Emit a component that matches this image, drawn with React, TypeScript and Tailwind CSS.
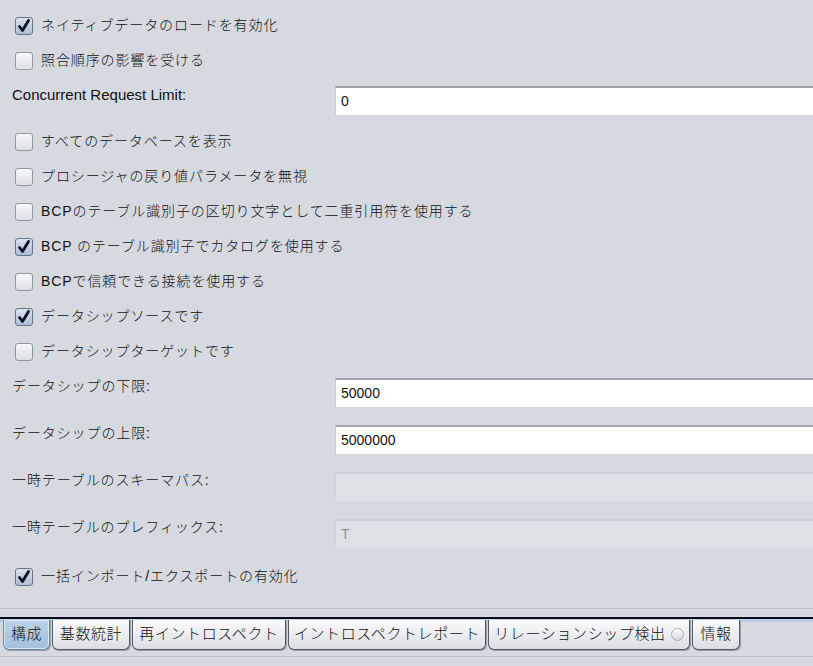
import React from "react";

const font = "font-['Liberation_Sans','Noto_Sans_CJK_JP',sans-serif]";

const Check = ({ checked }: { checked: boolean }) => (
  <span
    className={`relative flex h-[18px] w-[18px] shrink-0 items-center justify-center rounded-[3px] border ${
      checked
        ? "border-[#66748a] bg-gradient-to-b from-[#dbe3ee] to-[#aebed4]"
        : "border-[#9197a1] bg-gradient-to-b from-[#f7f8fa] to-[#dcdfe5]"
    }`}
  >
    {checked && (
      <svg width="14" height="14" viewBox="0 0 14 14">
        <path
          d="M2.5 7.5 L5.5 11.5 L11.5 1.5"
          fill="none"
          stroke="#0d1120"
          strokeWidth="2.8"
          strokeLinecap="round"
          strokeLinejoin="round"
        />
      </svg>
    )}
  </span>
);

const CheckRow = ({ label, checked = false }: { label: string; checked?: boolean }) => (
  <div className="flex h-[35px] items-center gap-[8px] pl-[15px]">
    <Check checked={checked} />
    <span className="text-[14px] font-light leading-[17px] tracking-[0.9px] text-[#111]">{label}</span>
  </div>
);

const FieldRow = ({
  label,
  value,
  disabled = false,
  top,
  h,
}: {
  label: string;
  value: string;
  disabled?: boolean;
  top: string;
  h: string;
}) => (
  <div className={`flex items-start ${h} ${top}`}>
    <span className="w-[335px] shrink-0 pl-[12px] text-[14px] font-light leading-[17px] tracking-[0.9px] text-[#111]">
      {label}
    </span>
    <div
      className={`flex h-[29px] w-[500px] shrink-0 items-center border-l border-t-2 pl-[5px] text-[14px] ${
        disabled
          ? "border-l-[#d0d3d8] border-t-[#cbced4] bg-[#dde0e4] text-[#8d9099]"
          : "border-l-[#c9cbcf] border-t-[#a2a4a8] bg-white text-[#111]"
      }`}
    >
      {value}
    </div>
  </div>
);

const tabs = [
  { label: "構成", w: "w-[47px]", active: true },
  { label: "基数統計", w: "w-[78px]" },
  { label: "再イントロスペクト", w: "w-[154px]" },
  { label: "イントロスペクトレポート", w: "w-[198px]" },
  { label: "リレーションシップ検出", w: "w-[202px]", dot: true },
  { label: "情報", w: "w-[48px]" },
];

export default function App() {
  return (
    <div className={`h-[666px] w-[813px] overflow-hidden bg-[#d6d9e0] ${font}`}>
      <div className="flex flex-col pt-[8px]">
        <CheckRow label="ネイティブデータのロードを有効化" checked />
        <CheckRow label="照合順序の影響を受ける" />
        <div className="flex h-[46px] items-start pt-[8px]">
          <span className="w-[335px] shrink-0 pl-[12px] text-[15px] leading-[17px] text-[#111]">
            Concurrent Request Limit:
          </span>
          <div className="flex h-[29px] w-[500px] shrink-0 items-center border-l border-t-2 border-l-[#c9cbcf] border-t-[#a2a4a8] bg-white pl-[5px] text-[14px] text-[#111]">
            0
          </div>
        </div>
        <CheckRow label="すべてのデータベースを表示" />
        <CheckRow label="プロシージャの戻り値パラメータを無視" />
        <CheckRow label="BCPのテーブル識別子の区切り文字として二重引用符を使用する" />
        <CheckRow label="BCP のテーブル識別子でカタログを使用する" checked />
        <CheckRow label="BCPで信頼できる接続を使用する" />
        <CheckRow label="データシップソースです" checked />
        <CheckRow label="データシップターゲットです" />
        <FieldRow label="データシップの下限:" value="50000" top="pt-[9px]" h="h-[47px]" />
        <FieldRow label="データシップの上限:" value="5000000" top="pt-[9px]" h="h-[47px]" />
        <FieldRow label="一時テーブルのスキーマパス:" value="" disabled top="pt-[9px]" h="h-[47px]" />
        <FieldRow label="一時テーブルのプレフィックス:" value="T" disabled top="pt-[9px]" h="h-[49px]" />
        <CheckRow label="一括インポート/エクスポートの有効化" checked />
      </div>

      <div className="mt-[14px] h-px bg-[#bfc2c8]" />
      <div className="mt-[8px] h-[2px] bg-[#0c0c1c]" />
      <div className="relative h-[40px]">
        <div className="absolute inset-x-0 top-0 h-[3px] bg-[#b9cde3]" />
        <div className="relative flex gap-[2px] pl-[3px] pt-[1px]">
          {tabs.map((t) => (
            <div
              key={t.label}
              className={`flex h-[30px] ${t.w} items-center justify-center gap-[5px] rounded-b-[6px] border border-t-0 text-[15px] font-light text-[#111] shadow-[1px_1px_0_#9a9da5] ${
                t.active
                  ? "border-[#6d87a6] bg-gradient-to-b from-[#bcd1e8] to-[#a3bfdc] ring-1 ring-inset ring-[#dae6f3]"
                  : "border-[#55596a] bg-gradient-to-b from-[#fbfbfc] to-[#dcdee3]"
              }`}
            >
              <span className="tracking-[0.6px]">{t.label}</span>
              {t.dot && (
                <span className="h-[13px] w-[13px] rounded-full border border-[#a9acb3] bg-gradient-to-b from-[#ffffff] to-[#d3d5da]" />
              )}
            </div>
          ))}
        </div>
        <div className="absolute inset-x-0 top-[37px] h-px bg-[#bfc2c8]" />
      </div>
    </div>
  );
}
